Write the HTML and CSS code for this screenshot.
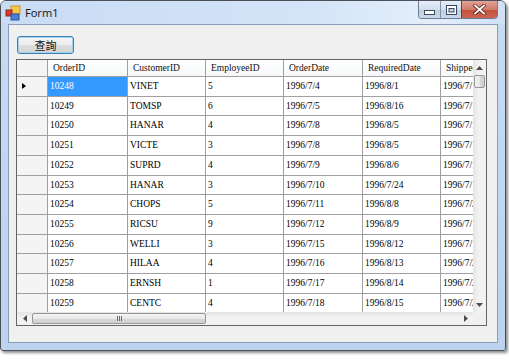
FILE: index.html
```html
<!DOCTYPE html>
<html>
<head>
<meta charset="utf-8">
<link rel="stylesheet" href="styles.css">
</head>
<body>
<div class="window">
  <div class="titlebar">
    <svg class="appicon" width="16" height="16" viewBox="0 0 16 16">
      <rect x="6" y="1" width="9" height="8" fill="#f5c84a" stroke="#c89a20" stroke-width="1"/>
      <rect x="1" y="5" width="6" height="6" fill="#d83a2a" stroke="#9a2418" stroke-width="1"/>
      <rect x="6" y="9" width="8" height="6" fill="#4a7fd8" stroke="#2a52a0" stroke-width="1"/>
    </svg>
    <span class="title">Form1</span>
    <div class="caption-btns">
      <div class="cbtn min"><svg width="11" height="5" viewBox="0 0 11 5"><rect x="0.5" y="0.5" width="10" height="4" fill="#fff" stroke="#3b4a5c"/></svg></div>
      <div class="cbtn max"><svg width="11" height="10" viewBox="0 0 11 10"><rect x="0.5" y="0.5" width="10" height="9" fill="#fff" stroke="#3b4a5c"/><rect x="3" y="3.5" width="5" height="3.5" fill="#c8d3e0" stroke="#3b4a5c"/></svg></div>
      <div class="cbtn close"><svg width="13" height="11" viewBox="0 0 13 11"><path d="M2 1.5 L11 9.5 M11 1.5 L2 9.5" stroke="#6a2a22" stroke-width="3.6" stroke-linecap="square"/><path d="M2 1.5 L11 9.5 M11 1.5 L2 9.5" stroke="#fff" stroke-width="1.8" stroke-linecap="square"/></svg></div>
    </div>
  </div>
  <div class="client">
    <button class="query">查詢</button>
    <div class="dgv">
      <div class="dgv-main">
        <div class="dgv-view">
          <div class="row head">
            <div class="c rh"></div>
            <div class="c w80">OrderID</div>
            <div class="c w78">CustomerID</div>
            <div class="c w78">EmployeeID</div>
            <div class="c w79">OrderDate</div>
            <div class="c w78">RequiredDate</div>
            <div class="c wrest">ShippedDate</div>
          </div>
          <div class="row"><div class="c rh"><span class="cur"></span></div><div class="c w80 sel">10248</div><div class="c w78">VINET</div><div class="c w78">5</div><div class="c w79">1996/7/4</div><div class="c w78">1996/8/1</div><div class="c wrest">1996/7/16</div></div>
          <div class="row"><div class="c rh"></div><div class="c w80">10249</div><div class="c w78">TOMSP</div><div class="c w78">6</div><div class="c w79">1996/7/5</div><div class="c w78">1996/8/16</div><div class="c wrest">1996/7/10</div></div>
          <div class="row"><div class="c rh"></div><div class="c w80">10250</div><div class="c w78">HANAR</div><div class="c w78">4</div><div class="c w79">1996/7/8</div><div class="c w78">1996/8/5</div><div class="c wrest">1996/7/12</div></div>
          <div class="row"><div class="c rh"></div><div class="c w80">10251</div><div class="c w78">VICTE</div><div class="c w78">3</div><div class="c w79">1996/7/8</div><div class="c w78">1996/8/5</div><div class="c wrest">1996/7/15</div></div>
          <div class="row"><div class="c rh"></div><div class="c w80">10252</div><div class="c w78">SUPRD</div><div class="c w78">4</div><div class="c w79">1996/7/9</div><div class="c w78">1996/8/6</div><div class="c wrest">1996/7/11</div></div>
          <div class="row"><div class="c rh"></div><div class="c w80">10253</div><div class="c w78">HANAR</div><div class="c w78">3</div><div class="c w79">1996/7/10</div><div class="c w78">1996/7/24</div><div class="c wrest">1996/7/16</div></div>
          <div class="row"><div class="c rh"></div><div class="c w80">10254</div><div class="c w78">CHOPS</div><div class="c w78">5</div><div class="c w79">1996/7/11</div><div class="c w78">1996/8/8</div><div class="c wrest">1996/7/23</div></div>
          <div class="row"><div class="c rh"></div><div class="c w80">10255</div><div class="c w78">RICSU</div><div class="c w78">9</div><div class="c w79">1996/7/12</div><div class="c w78">1996/8/9</div><div class="c wrest">1996/7/15</div></div>
          <div class="row"><div class="c rh"></div><div class="c w80">10256</div><div class="c w78">WELLI</div><div class="c w78">3</div><div class="c w79">1996/7/15</div><div class="c w78">1996/8/12</div><div class="c wrest">1996/7/17</div></div>
          <div class="row"><div class="c rh"></div><div class="c w80">10257</div><div class="c w78">HILAA</div><div class="c w78">4</div><div class="c w79">1996/7/16</div><div class="c w78">1996/8/13</div><div class="c wrest">1996/7/22</div></div>
          <div class="row"><div class="c rh"></div><div class="c w80">10258</div><div class="c w78">ERNSH</div><div class="c w78">1</div><div class="c w79">1996/7/17</div><div class="c w78">1996/8/14</div><div class="c wrest">1996/7/23</div></div>
          <div class="row"><div class="c rh"></div><div class="c w80">10259</div><div class="c w78">CENTC</div><div class="c w78">4</div><div class="c w79">1996/7/18</div><div class="c w78">1996/8/15</div><div class="c wrest">1996/7/25</div></div>
        </div>
        <div class="vscroll">
          <div class="sbtn vbtn"><svg width="7" height="4" viewBox="0 0 7 4"><path d="M0 4 L3.5 0 L7 4 Z" fill="#4d4d4d"/></svg></div>
          <div class="vthumb"></div>
          <div class="vfill"></div>
          <div class="sbtn vbtn"><svg width="7" height="4" viewBox="0 0 7 4"><path d="M0 0 L7 0 L3.5 4 Z" fill="#4d4d4d"/></svg></div>
        </div>
      </div>
      <div class="hscroll-row">
        <div class="hscroll">
          <div class="sbtn hbtn"><svg width="4" height="7" viewBox="0 0 4 7"><path d="M4 0 L4 7 L0 3.5 Z" fill="#4d4d4d"/></svg></div>
          <div class="hthumb"><span class="grip"></span></div>
          <div class="hfill"></div>
          <div class="sbtn hbtn"><svg width="4" height="7" viewBox="0 0 4 7"><path d="M0 0 L4 3.5 L0 7 Z" fill="#4d4d4d"/></svg></div>
        </div>
        <div class="corner"></div>
      </div>
    </div>
  </div>
</div>
</body>
</html>
```

FILE: styles.css
```css
html, body {
  margin: 0;
  padding: 0;
  background: #ffffff;
}

body {
  width: 509px;
  height: 360px;
  overflow: hidden;
  font-family: "Liberation Serif", serif;
}

.window {
  width: 506px;
  height: 351px;
  box-sizing: border-box;
  border: 1px solid #4b5059;
  border-radius: 6px 6px 3px 3px;
  background: linear-gradient(to bottom, #d4e4f7 0px, #c6daf2 24px, #bcd2ed 100%);
  box-shadow: 2px 2px 3px rgba(0, 0, 0, 0.45);
  display: flex;
  flex-direction: column;
  padding: 0 7px 7px 7px;
}

.titlebar {
  height: 23px;
  margin: 0 -7px;
  display: flex;
  align-items: flex-start;
  background: linear-gradient(to right, #c9dcf4 0%, #d3e4f8 60%, #e4eefa 85%, #d0e1f6 100%);
  border-radius: 5px 5px 0 0;
}

.appicon {
  margin: 4px 0 0 4px;
  flex: none;
}

.title {
  margin: 4px 0 0 4px;
  font-family: "Noto Sans", "Open Sans", sans-serif;
  font-size: 11px;
  line-height: 15px;
  color: #1b1b1b;
}

.caption-btns {
  margin-left: auto;
  margin-right: 7px;
  display: flex;
  height: 17px;
  border: 1px solid #6c7d93;
  border-top: none;
  border-radius: 0 0 4px 4px;
  overflow: hidden;
}

.cbtn {
  height: 17px;
  display: flex;
  align-items: center;
  justify-content: center;
  box-sizing: border-box;
}

.cbtn.min {
  width: 22px;
  background: linear-gradient(to bottom, #e6eef8 0%, #d2deec 50%, #bfcde0 51%, #cad8eb 100%);
  border-right: 1px solid #8092a8;
  padding-top: 5px;
}

.cbtn.max {
  width: 21px;
  background: linear-gradient(to bottom, #e6eef8 0%, #d2deec 50%, #bfcde0 51%, #cad8eb 100%);
  border-right: 1px solid #7a3a34;
}

.cbtn.close {
  width: 35px;
  background: linear-gradient(to bottom, #e2a396 0%, #d27c6c 50%, #c2503e 51%, #cc6452 100%);
}

.client {
  width: 490px;
  height: 319px;
  box-sizing: border-box;
  border: 1px solid #8a9db8;
  background: #f0f0f0;
  padding: 11px 0 0 8px;
  display: flex;
  flex-direction: column;
  align-items: flex-start;
}

.query {
  width: 57px;
  height: 18px;
  box-sizing: border-box;
  margin: 0;
  padding: 0;
  border: 1px solid #3c7fb1;
  border-radius: 3px;
  background: linear-gradient(to bottom, #f6f6f6 0%, #ececec 50%, #dedede 51%, #d4d4d4 100%);
  box-shadow: inset 0 0 0 1px #9fd4f0;
  font-family: "Noto Sans CJK TC", "Noto Sans CJK SC", sans-serif;
  font-size: 11px;
  line-height: 14px;
  color: #111;
}

.dgv {
  margin: 5px 0 0 -1px;
  width: 471px;
  height: 267px;
  box-sizing: border-box;
  border: 1px solid #646464;
  background: #ababab;
  display: flex;
  flex-direction: column;
}

.dgv-main {
  display: flex;
  height: 252px;
}

.dgv-view {
  width: 456px;
  height: 252px;
  overflow: hidden;
  background: #fff;
}

.row {
  display: flex;
  height: 19.73px;
  white-space: nowrap;
}

.row.head {
  height: 17px;
}

.c {
  flex: none;
  box-sizing: border-box;
  border-right: 1px solid #a0a0a0;
  border-bottom: 1px solid #a0a0a0;
  padding-left: 2px;
  font-size: 9.5px;
  line-height: 19px;
  color: #000;
  overflow: hidden;
  background: #fff;
}

.head .c {
  background: linear-gradient(to bottom, #ffffff 0%, #f7f8fa 100%);
  line-height: 16px;
  padding-left: 5px;
  color: #111;
}

.c.rh {
  width: 31px;
  background: #f4f4f4;
  position: relative;
}

.head .c.rh {
  background: #f4f4f4;
}

.w80 { width: 80px; }
.w79 { width: 79px; }
.w78 { width: 78px; }
.wrest { width: 80px; }

.c.sel {
  background: #3399ff;
  color: #fff;
}

.cur {
  position: absolute;
  left: 5px;
  top: 6px;
  width: 0;
  height: 0;
  border-top: 3.5px solid transparent;
  border-bottom: 3.5px solid transparent;
  border-left: 4px solid #000;
}

.vscroll {
  width: 13px;
  height: 252px;
  display: flex;
  flex-direction: column;
  background: linear-gradient(to right, #e4e4e4 0%, #f2f2f2 40%, #f2f2f2 100%);
}

.sbtn {
  display: flex;
  align-items: center;
  justify-content: center;
  flex: none;
}

.vbtn {
  height: 15px;
}

.vthumb {
  height: 13px;
  margin: 0 1px;
  box-sizing: border-box;
  border: 1px solid #979797;
  border-radius: 2px;
  background: linear-gradient(to right, #f3f3f3 0%, #e9e9e9 50%, #d8d8d8 51%, #d0d0d0 100%);
}

.vfill {
  flex: 1;
}

.hscroll-row {
  display: flex;
  height: 13px;
}

.hscroll {
  width: 456px;
  height: 13px;
  display: flex;
  background: linear-gradient(to bottom, #e4e4e4 0%, #f2f2f2 40%, #f2f2f2 100%);
}

.hbtn {
  width: 15px;
}

.hthumb {
  width: 174px;
  margin: 1px 0;
  box-sizing: border-box;
  border: 1px solid #979797;
  border-radius: 2px;
  background: linear-gradient(to bottom, #f3f3f3 0%, #e9e9e9 50%, #d8d8d8 51%, #d0d0d0 100%);
  display: flex;
  align-items: center;
  justify-content: center;
}

.grip {
  width: 5px;
  height: 5px;
  background: repeating-linear-gradient(to right, #6a6a6a 0px, #6a6a6a 1px, transparent 1px, transparent 2px);
}

.hfill {
  flex: 1;
}

.corner {
  width: 13px;
  height: 13px;
  background: #f0f0f0;
}
```
